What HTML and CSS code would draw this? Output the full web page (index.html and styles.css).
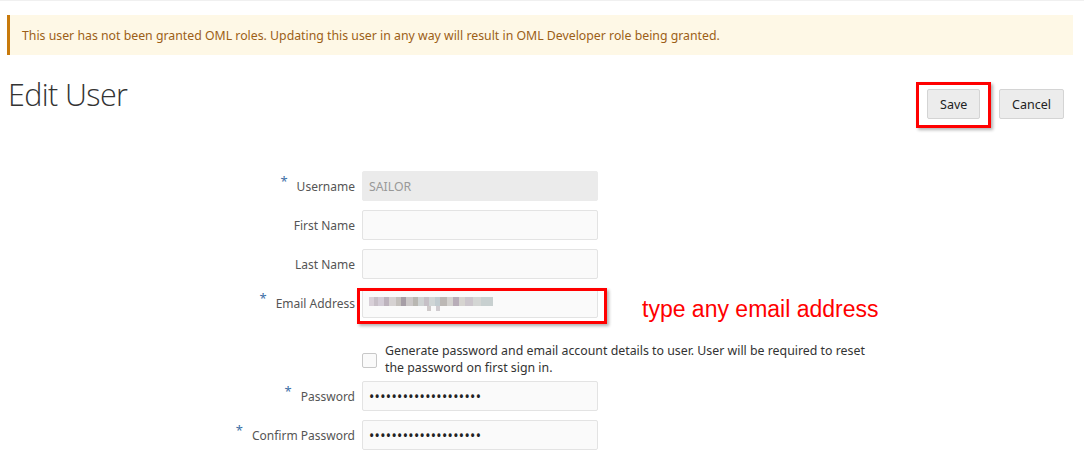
FILE: index.html
```html
<!DOCTYPE html>
<html lang="en">
<head>
<meta charset="utf-8">
<title>Edit User</title>
<link rel="stylesheet" href="styles.css">
</head>
<body>
<div class="banner">This user has not been granted OML roles. Updating this user in any way will result in OML Developer role being granted.</div>
<div class="header">
  <h1 class="title">Edit User</h1>
  <div class="actions">
    <span class="mark mark-save"><button class="btn" type="button">Save</button></span>
    <button class="btn" type="button">Cancel</button>
  </div>
</div>
<form class="form">
  <div class="row">
    <label class="label"><span class="req">*</span>Username</label>
    <div class="input disabled">SAILOR</div>
  </div>
  <div class="row">
    <label class="label">First Name</label>
    <div class="input"></div>
  </div>
  <div class="row">
    <label class="label">Last Name</label>
    <div class="input"></div>
  </div>
  <div class="row">
    <label class="label"><span class="req">*</span>Email Address</label>
    <span class="mark mark-email"><div class="input"><span class="blur"><span class="blur-tail"></span></span></div></span>
    <span class="note">type any email address</span>
  </div>
  <div class="row row-check">
    <span class="check"></span>
    <span class="check-text">Generate password and email account details to user. User will be required to reset the password on first sign in.</span>
  </div>
  <div class="row">
    <label class="label"><span class="req">*</span>Password</label>
    <div class="input"><span class="dots">••••••••••••••••••••</span></div>
  </div>
  <div class="row">
    <label class="label"><span class="req">*</span>Confirm Password</label>
    <div class="input"><span class="dots">••••••••••••••••••••</span></div>
  </div>
</form>
</body>
</html>
```
FILE: styles.css
```css
* { box-sizing: border-box; }
html, body { margin: 0; padding: 0; background: #fff; }
body {
  font-family: "Noto Sans", "Open Sans", sans-serif;
  font-size: 12.5px;
  color: #333;
  border-top: 1px solid #f0f0f0;
}
.banner {
  margin: 14px 11px 0 7px;
  height: 40px;
  background: #fef8e6;
  border-left: 3px solid #c87a0c;
  color: #9c5f17;
  padding-left: 12px;
  display: flex;
  align-items: center;
  font-size: 12.3px;
  padding-top: 1px;
}
.header {
  display: flex;
  justify-content: space-between;
  align-items: flex-start;
  padding: 0 20px 0 8px;
}
.title {
  margin: 21px 0 0 0;
  font-family: "Open Sans", sans-serif;
  font-weight: 300;
  font-size: 30.5px;
  line-height: 36px;
  color: #333;
  letter-spacing: -0.6px;
}
.actions {
  display: flex;
  gap: 19px;
  margin-top: 34px;
}
.btn {
  height: 30px;
  padding: 0 12px;
  background: #ececec;
  border: 1px solid #d4d4d4;
  border-radius: 2px;
  font-family: "Noto Sans", sans-serif;
  font-size: 12.5px;
  color: #222;
}
.btn:first-child { width: 53px; }
.mark { position: relative; display: inline-block; }
.mark::after {
  content: "";
  position: absolute;
  border: 3px solid #f00;
  box-shadow: 2px 2px 3px rgba(0,0,0,0.3);
  pointer-events: none;
}
.mark-save::after { left: -11px; right: -11px; top: -7px; bottom: -9px; }
.mark-email::after { left: -5px; right: -9px; top: 0px; bottom: -6px; }
.form {
  margin-top: 52px;
  display: flex;
  flex-direction: column;
  gap: 9px;
}
.row {
  display: flex;
  align-items: center;
  height: 30px;
}
.label {
  width: 355px;
  text-align: right;
  color: #555;
  font-size: 12px;
  margin-right: 7px;
  white-space: nowrap;
}
.req {
  color: #3d6fa6;
  font-size: 13px;
  position: relative;
  top: -5px;
  margin-right: 9px;
}
.input {
  width: 236px;
  height: 30px;
  background: #fafafa;
  border: 1px solid #e3e3e3;
  border-radius: 2px;
  padding: 0 6px;
  display: flex;
  align-items: center;
  color: #333;
  font-size: 12.3px;
}
.input.disabled {
  background: #ebebeb;
  border-color: #ebebeb;
  color: #999;
}
.blur {
  position: relative;
  display: block;
  width: 124px;
  height: 9px;
  margin-top: -4px;
  background: linear-gradient(90deg,
    #d8d0d8 0 5px, #c7bfc7 5px 9px, #d3ccd6 9px 15px, #bdb3bd 15px 20px,
    #d6d2d2 20px 27px, #c4c0bc 27px 32px, #a69ea6 32px 37px, #ccc8c8 37px 44px,
    #b9b7b2 44px 49px, #cfd3d3 49px 55px, #c6c0c6 55px 60px, #d0d6d6 60px 66px,
    #c2ccd0 66px 71px, #bcb8b5 71px 78px, #d4d2cf 78px 84px, #b8adb8 84px 90px,
    #d6d4d0 90px 96px, #ccc6cc 96px 104px, #d4d6d4 104px 112px, #c8d0d0 112px 124px);
}
.blur-tail {
  position: absolute;
  left: 58px;
  top: 9px;
  width: 13px;
  height: 5px;
  background: linear-gradient(90deg, #cfcaca 0 4px, transparent 4px 9px, #d0ccd0 9px 13px);
}
.note {
  margin-left: 44px;
  margin-top: 12px;
  font-family: "Liberation Sans", Arial, sans-serif;
  font-size: 23px;
  color: #f00;
}
.row-check {
  height: 34px;
  margin-top: 15px;
  margin-bottom: -4px;
  padding-left: 362px;
  align-items: center;
}
.check {
  width: 15px;
  height: 15px;
  border: 1px solid #c8c8c8;
  border-radius: 2px;
  background: #fafafa;
  flex: none;
  margin-right: 8px;
  margin-top: 3px;
}
.check-text {
  width: 490px;
  line-height: 17px;
  font-size: 12.35px;
  color: #333;
}
.dots {
  font-size: 14px;
  letter-spacing: 0.35px;
  color: #222;
  margin-top: 1px;
}
```
